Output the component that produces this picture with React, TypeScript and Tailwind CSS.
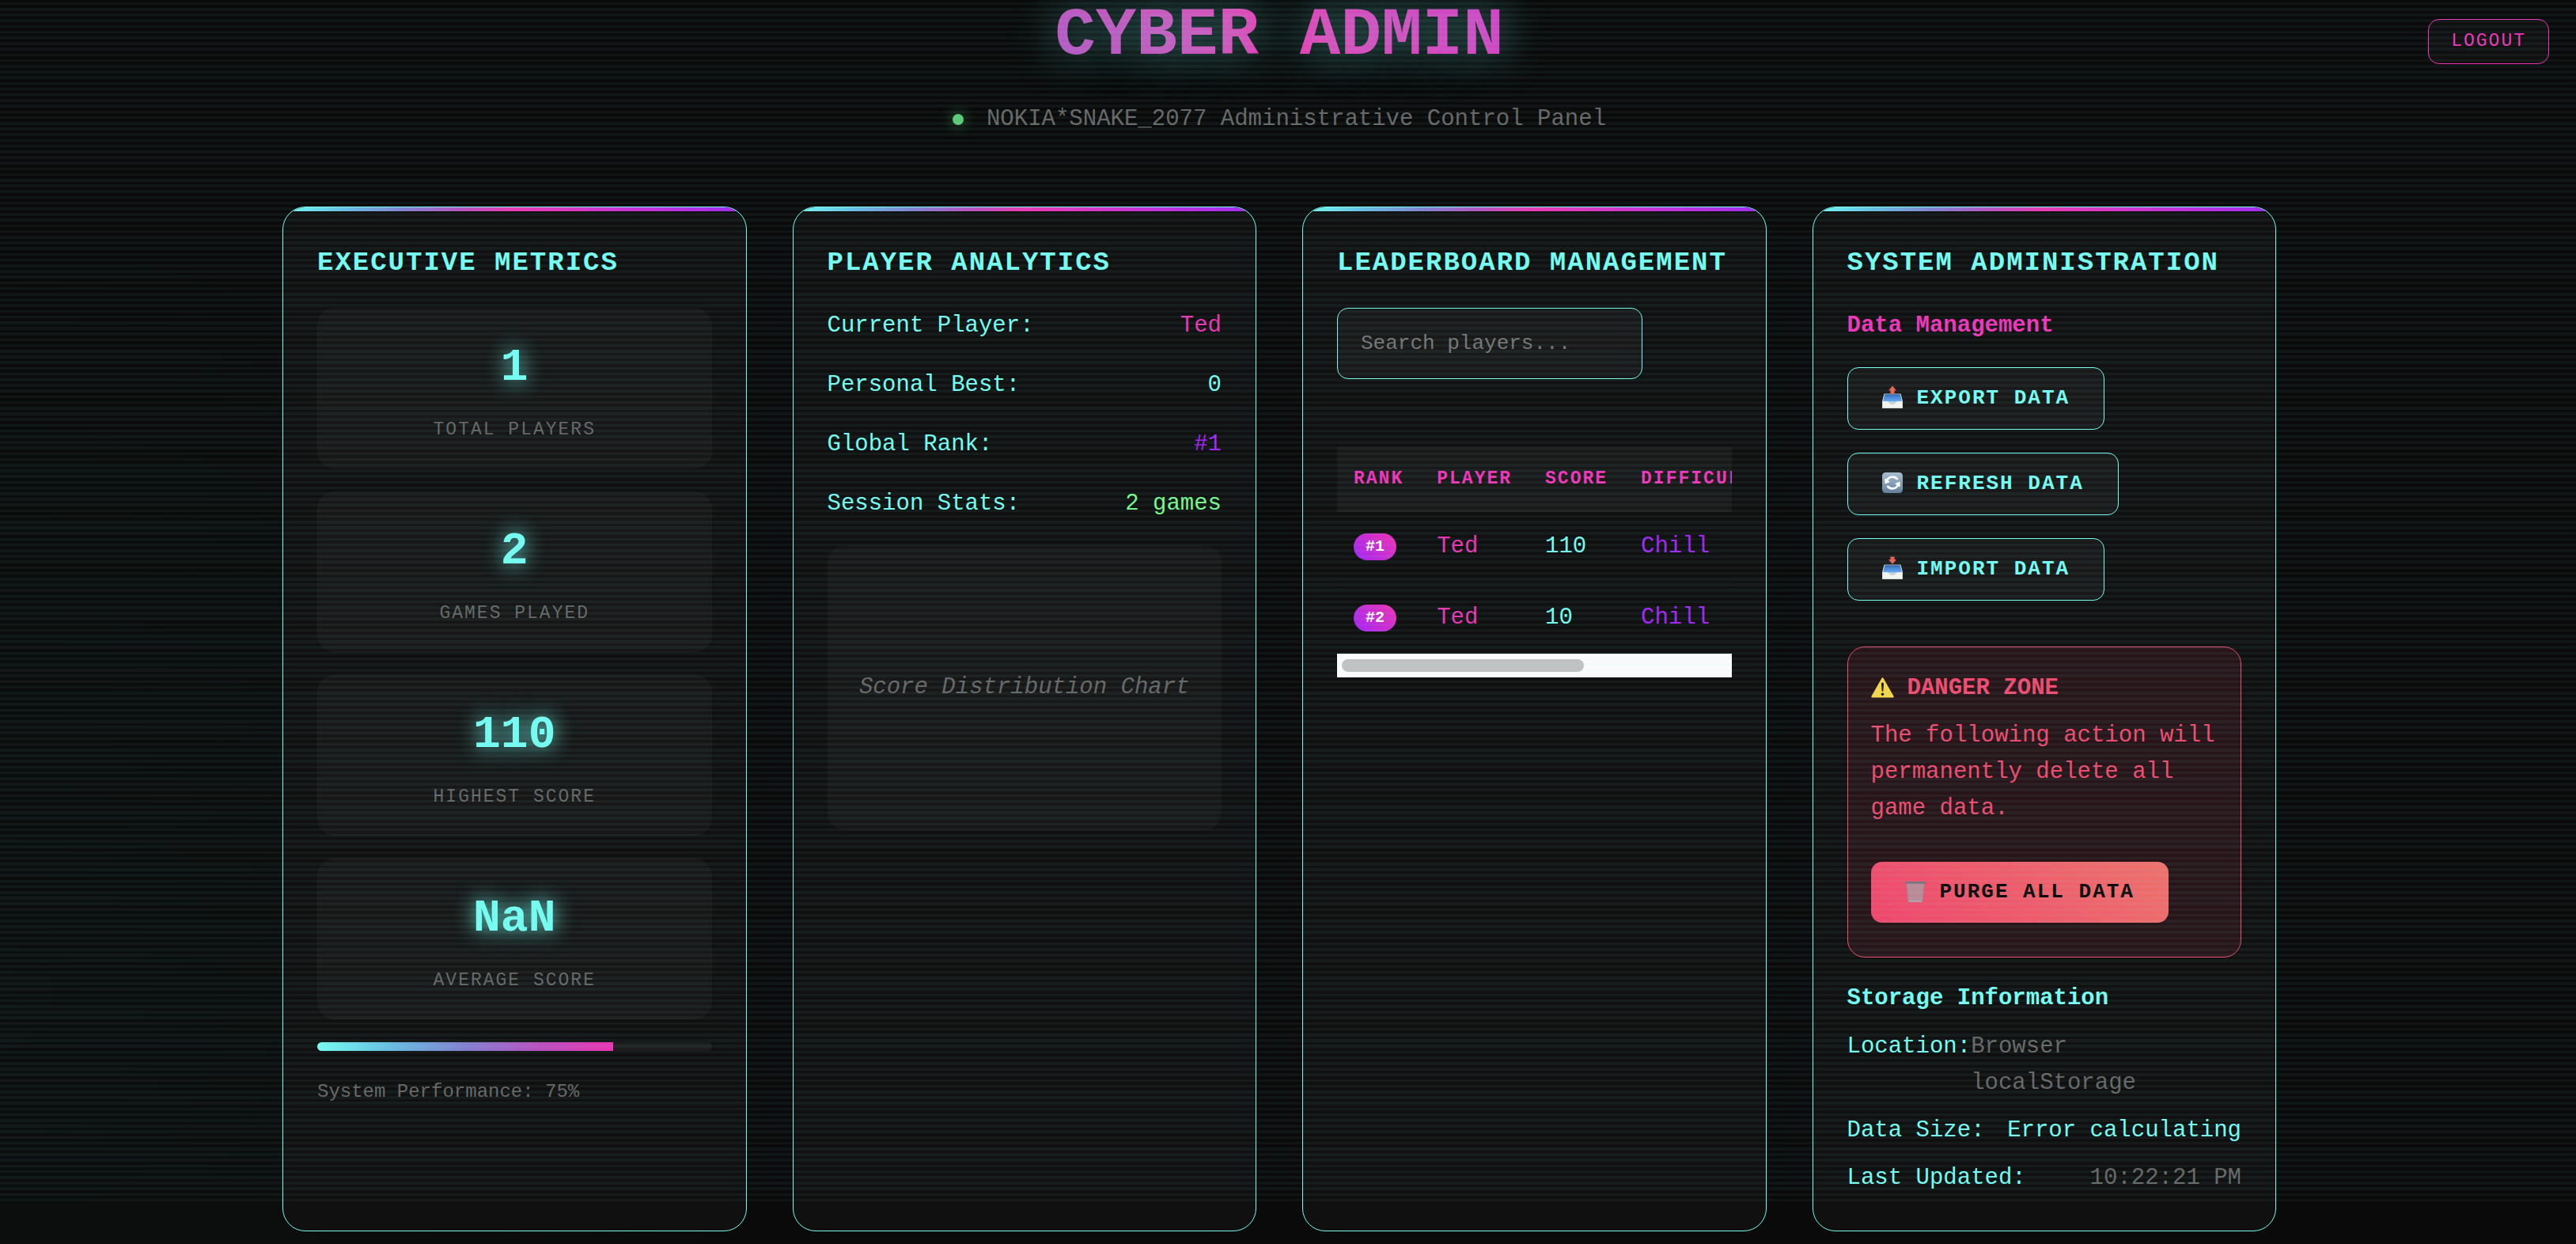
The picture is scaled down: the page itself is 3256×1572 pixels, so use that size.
import type { ReactNode } from "react";

const metrics = [
  { value: "1", label: "TOTAL PLAYERS" },
  { value: "2", label: "GAMES PLAYED" },
  { value: "110", label: "HIGHEST SCORE" },
  { value: "NaN", label: "AVERAGE SCORE" },
];

const playerStats = [
  { label: "Current Player:", value: "Ted", color: "text-[#e834b3]" },
  { label: "Personal Best:", value: "0", color: "text-[#75fbf0]" },
  { label: "Global Rank:", value: "#1", color: "text-[#a324f5]" },
  { label: "Session Stats:", value: "2 games", color: "text-[#78f58c]" },
];

const leaderboard = [
  { rank: "#1", player: "Ted", score: "110", difficulty: "Chill" },
  { rank: "#2", player: "Ted", score: "10", difficulty: "Chill" },
];

function TrayIcon({ direction }: { direction: "out" | "in" }) {
  return (
    <svg aria-hidden="true" viewBox="0 0 26 30" className="mb-[3px] h-[30px] w-[26px] shrink-0">
      <defs>
        <linearGradient id={`tray-${direction}`} x1="0" y1="0" x2="0" y2="1">
          <stop offset="0" stopColor="#2f66b4" />
          <stop offset="1" stopColor="#69b0fb" />
        </linearGradient>
      </defs>
      <path d="M2.5 10.5H23.5L26 20V29H0V20Z" fill="#d3d4d2" />
      <path d="M3.3 11.3H22.7L25 20.5H1Z" fill={`url(#tray-${direction})`} />
      <path d="M.8 20.3H6.8C8.5 20.3 9 24.3 13 24.3S17.500 20.3 19.200 20.3H25.200V28.200H.8Z" fill="#f3f3f0" />
      {direction === "out" ? (
        <path d="M13 0.500L18 6.500H15.600V10.800H10.400V6.500H8Z" fill="#e8604f" />
      ) : (
        <path d="M10.400 0.500H15.600V4H18L13 10L8 4H10.400Z" fill="#e8604f" />
      )}
    </svg>
  );
}

function RefreshIcon() {
  return (
    <svg aria-hidden="true" viewBox="0 0 26 30" className="mb-[3px] h-[30px] w-[26px] shrink-0">
      <defs>
        <linearGradient id="refresh-tile" x1="0" y1="0" x2="0" y2="1">
          <stop offset="0" stopColor="#a9bccd" />
          <stop offset="1" stopColor="#667f9d" />
        </linearGradient>
      </defs>
      <rect x="0" y="2" width="26" height="26" rx="4.500" fill="url(#refresh-tile)" />
      <g fill="none" stroke="#fff" strokeWidth="2.600">
        <path d="M5.500 13.500A7.800 7.800 0 0 1 19.500 11" />
        <path d="M20.500 16.500A7.800 7.800 0 0 1 6.500 19" />
      </g>
      <path d="M3.300 9.500L3.600 16.500L10 13.800Z" fill="#fff" />
      <path d="M22.700 20.500L22.400 13.500L16 16.200Z" fill="#fff" />
    </svg>
  );
}

function WarningIcon() {
  return (
    <svg aria-hidden="true" viewBox="0 0 29 26" className="mb-[3px] h-[26px] w-[29px] shrink-0">
      <path d="M13.300 1.200Q14.500-.8 15.700 1.200L28.400 23.600Q29.300 25.600 27.200 25.600H1.800Q-.3 25.600.6 23.600Z" fill="#f6d54a" />
      <path d="M13 8Q13 6.500 14.500 6.500T16 8L15.300 17.500H13.700Z" fill="#1a1408" />
      <circle cx="14.500" cy="21.300" r="1.800" fill="#1a1408" />
    </svg>
  );
}

function TrashIcon() {
  return (
    <svg aria-hidden="true" viewBox="0 0 26 28" className="mb-[2px] h-[28px] w-[26px] shrink-0">
      <defs>
        <pattern id="mesh" width="4" height="4" patternUnits="userSpaceOnUse">
          <path d="M0 0L4 4M4 0L0 4" stroke="#9b929e" strokeWidth="0.900" />
        </pattern>
      </defs>
      <path d="M2 3H24L21.500 26H4.500Z" fill="#d5828f" />
      <path d="M2 3H24L21.500 26H4.500Z" fill="url(#mesh)" stroke="#9a8f9b" strokeWidth="1.200" />
      <path d="M4.200 24.800H21.800L21.400 27H4.600Z" fill="#a9a4ae" />
      <rect x="0" y="1" width="26" height="2.600" rx="1.200" fill="#75737e" />
    </svg>
  );
}

function Card({ title, children }: { title: string; children: ReactNode }) {
  return (
    <section className="relative min-w-0 overflow-hidden rounded-[29px] border border-[#75fbf0] bg-[#101010] p-[43px]">
      <div className="absolute inset-x-0 top-0 h-[5px] bg-[linear-gradient(90deg,#75fbf0_0%,#68bce0_13%,#837fcf_26%,#b94fc0_38%,#ee34b0_50%,#a324f5_100%)]" />
      <h2 className="mb-[29px] text-[34px] leading-[55px] font-bold tracking-[2px] whitespace-nowrap">{title}</h2>
      {children}
    </section>
  );
}

function ActionButton({ icon, children }: { icon: ReactNode; children: ReactNode }) {
  return (
    <button
      type="button"
      className="flex items-center gap-[18px] rounded-[14px] border border-[#75fbf0] bg-[#191919] px-[43px] py-[22px] text-[26px] leading-[33px] font-bold tracking-[2px] whitespace-nowrap"
    >
      {icon}
      {children}
    </button>
  );
}

export default function App() {
  return (
    <div className="relative min-h-screen overflow-hidden bg-[#0a0a0a] bg-[radial-gradient(circle_at_0%_80%,rgba(117,251,240,0.02),transparent_30%)] pb-[16px] font-['Courier_New','Liberation_Mono',monospace] text-[29px] leading-[46px] text-[#75fbf0]">
      <button
        type="button"
        className="absolute top-[24px] right-[34px] rounded-[14px] border border-[#ee34b8] bg-[#101010] px-[28px] py-[14px] text-[23px] leading-[27px] tracking-[2px] text-[#ee34b8]"
      >
        LOGOUT
      </button>

      <div className="pr-[22px]">
        <div className="mx-auto max-w-[2520px]">
          <header className="text-center">
            <h1 className="bg-[linear-gradient(45deg,#75fbf0_0%,#68bce0_13%,#837fcf_26%,#b94fc0_38%,#ee34b0_50%,#a324f5_100%)] bg-clip-text text-[86px] leading-[90px] font-bold text-transparent [text-shadow:0_0_54px_rgba(117,251,240,0.5)]">
              CYBER ADMIN
            </h1>
            <p className="mt-[38px] flex items-center justify-center gap-[29px] text-[#666666]">
              <span className="size-[14px] rounded-full bg-[#5dc878] shadow-[0_0_18px_#5dc87899]" />
              NOKIA*SNAKE_2077 Administrative Control Panel
            </p>
          </header>

          <main className="mt-[87px] grid grid-cols-4 gap-[58px]">
            <Card title="EXECUTIVE METRICS">
              <div className="flex flex-col gap-[29px]">
                {metrics.map((m) => (
                  <div key={m.label} className="rounded-[22px] border border-[#1b1b1b] bg-[#171717] py-[29px] text-center">
                    <div className="text-[58px] leading-[92px] font-bold [text-shadow:0_0_27px_#75fbf0]">{m.value}</div>
                    <div className="mt-[14px] text-[23px] leading-[37px] tracking-[2px] text-[#666666]">{m.label}</div>
                  </div>
                ))}
                <div
                  role="progressbar"
                  aria-label="System Performance"
                  aria-valuenow={75}
                  className="h-[11px] overflow-hidden rounded-[6px] bg-[#1d1d1d]"
                >
                  <div className="h-full w-3/4 bg-[linear-gradient(90deg,#75fbf0,#68bce0,#837fcf,#b94fc0,#ee34b0)]" />
                </div>
                <p className="text-[24px] text-[#666666]">System Performance: 75%</p>
              </div>
            </Card>

            <Card title="PLAYER ANALYTICS">
              <dl className="flex flex-col gap-[29px]">
                {playerStats.map((s) => (
                  <div key={s.label} className="flex justify-between">
                    <dt>{s.label}</dt>
                    <dd className={s.color}>{s.value}</dd>
                  </div>
                ))}
              </dl>
              <div className="mt-[29px] flex h-[360px] items-center justify-center rounded-[22px] bg-[#171717] text-[#666666] italic">
                Score Distribution Chart
              </div>
            </Card>

            <Card title="LEADERBOARD MANAGEMENT">
              <input
                type="text"
                aria-label="Search players"
                placeholder="Search players..."
                className="mb-[86px] block w-[386px] rounded-[14px] border border-[#75fbf0] bg-[#191919] px-[29px] py-[28px] text-[26px] leading-[32px] placeholder:text-[#757575]"
              />
              <div className="overflow-hidden">
                <table className="w-max border-collapse text-left">
                  <thead>
                    <tr className="bg-[#191919] text-[23px] tracking-[2px] text-[#ee34b8]">
                      {["RANK", "PLAYER", "SCORE", "DIFFICULTY"].map((h) => (
                        <th key={h} scope="col" className="h-[81px] border-b border-[#1f1f1f] px-[21px] py-0 font-bold">
                          {h}
                        </th>
                      ))}
                    </tr>
                  </thead>
                  <tbody>
                    {leaderboard.map((r) => (
                      <tr key={r.rank} className="border-b border-[#171717] last:border-b-0">
                        <td className="h-[90px] px-[21px] py-0">
                          <span className="block w-max rounded-[18px] bg-[linear-gradient(45deg,#a324f5,#ee34b0)] px-[15px] py-[5px] text-[20px] leading-[24px] font-bold text-white">
                            {r.rank}
                          </span>
                        </td>
                        <td className="px-[21px] py-0 text-[#e834b3]">{r.player}</td>
                        <td className="px-[21px] py-0">{r.score}</td>
                        <td className="px-[21px] py-0 text-[#a324f5]">{r.difficulty}</td>
                      </tr>
                    ))}
                  </tbody>
                </table>
              </div>
              <div className="flex h-[30px] items-center bg-[#fbfbfb] px-[6px]">
                <div className="h-[16px] w-[63%] rounded-full bg-[#c1c1c1]" />
              </div>
            </Card>

            <Card title="SYSTEM ADMINISTRATION">
              <h3 className="mb-[29px] font-bold text-[#ee34b8]">Data Management</h3>
              <div className="flex flex-col items-start gap-[29px]">
                <ActionButton icon={<TrayIcon direction="out" />}>EXPORT DATA</ActionButton>
                <ActionButton icon={<RefreshIcon />}>REFRESH DATA</ActionButton>
                <ActionButton icon={<TrayIcon direction="in" />}>IMPORT DATA</ActionButton>
              </div>

              <div className="mt-[58px] rounded-[22px] border border-[#ee4b6e] bg-[#271519] px-[29px] pt-[29px] pb-[43px] text-[#ee4b6e]">
                <h4 className="flex items-center gap-[17px] font-bold">
                  <WarningIcon />
                  DANGER ZONE
                </h4>
                <p className="mt-[14px]">The following action will permanently delete all game data.</p>
                <button
                  type="button"
                  className="mt-[44px] flex items-center gap-[18px] rounded-[14px] bg-[linear-gradient(45deg,#f0466c,#ee716b)] px-[43px] py-[22px] text-[26px] leading-[33px] font-bold tracking-[2px] whitespace-nowrap text-[#0a0a0a]"
                >
                  <TrashIcon />
                  PURGE ALL DATA
                </button>
              </div>

              <h3 className="mt-[29px] font-bold">Storage Information</h3>
              <dl className="mt-[15px] flex flex-col gap-[14px]">
                <div className="flex justify-between">
                  <dt>Location:</dt>
                  <dd className="text-[#666666]">Browser localStorage</dd>
                </div>
                <div className="flex justify-between">
                  <dt>Data Size:</dt>
                  <dd>Error calculating</dd>
                </div>
                <div className="flex justify-between">
                  <dt>Last Updated:</dt>
                  <dd className="text-[#666666]">10:22:21 PM</dd>
                </div>
              </dl>
            </Card>
          </main>
        </div>
      </div>

      {/* Scan lines: five bands in every 36px tile */}
      <div
        aria-hidden="true"
        className="pointer-events-none absolute inset-x-0 top-0 bottom-[54px] bg-[length:100%_36px] bg-[linear-gradient(transparent_3px,#75fbf00d_3px,#75fbf00d_6px,transparent_6px,transparent_10px,#75fbf00d_10px,#75fbf00d_14px,transparent_14px,transparent_17px,#75fbf00d_17px,#75fbf00d_21px,transparent_21px,transparent_24px,#75fbf00d_24px,#75fbf00d_28px,transparent_28px,transparent_32px,#75fbf00d_32px,#75fbf00d_35px,transparent_35px)]"
      />
    </div>
  );
}
